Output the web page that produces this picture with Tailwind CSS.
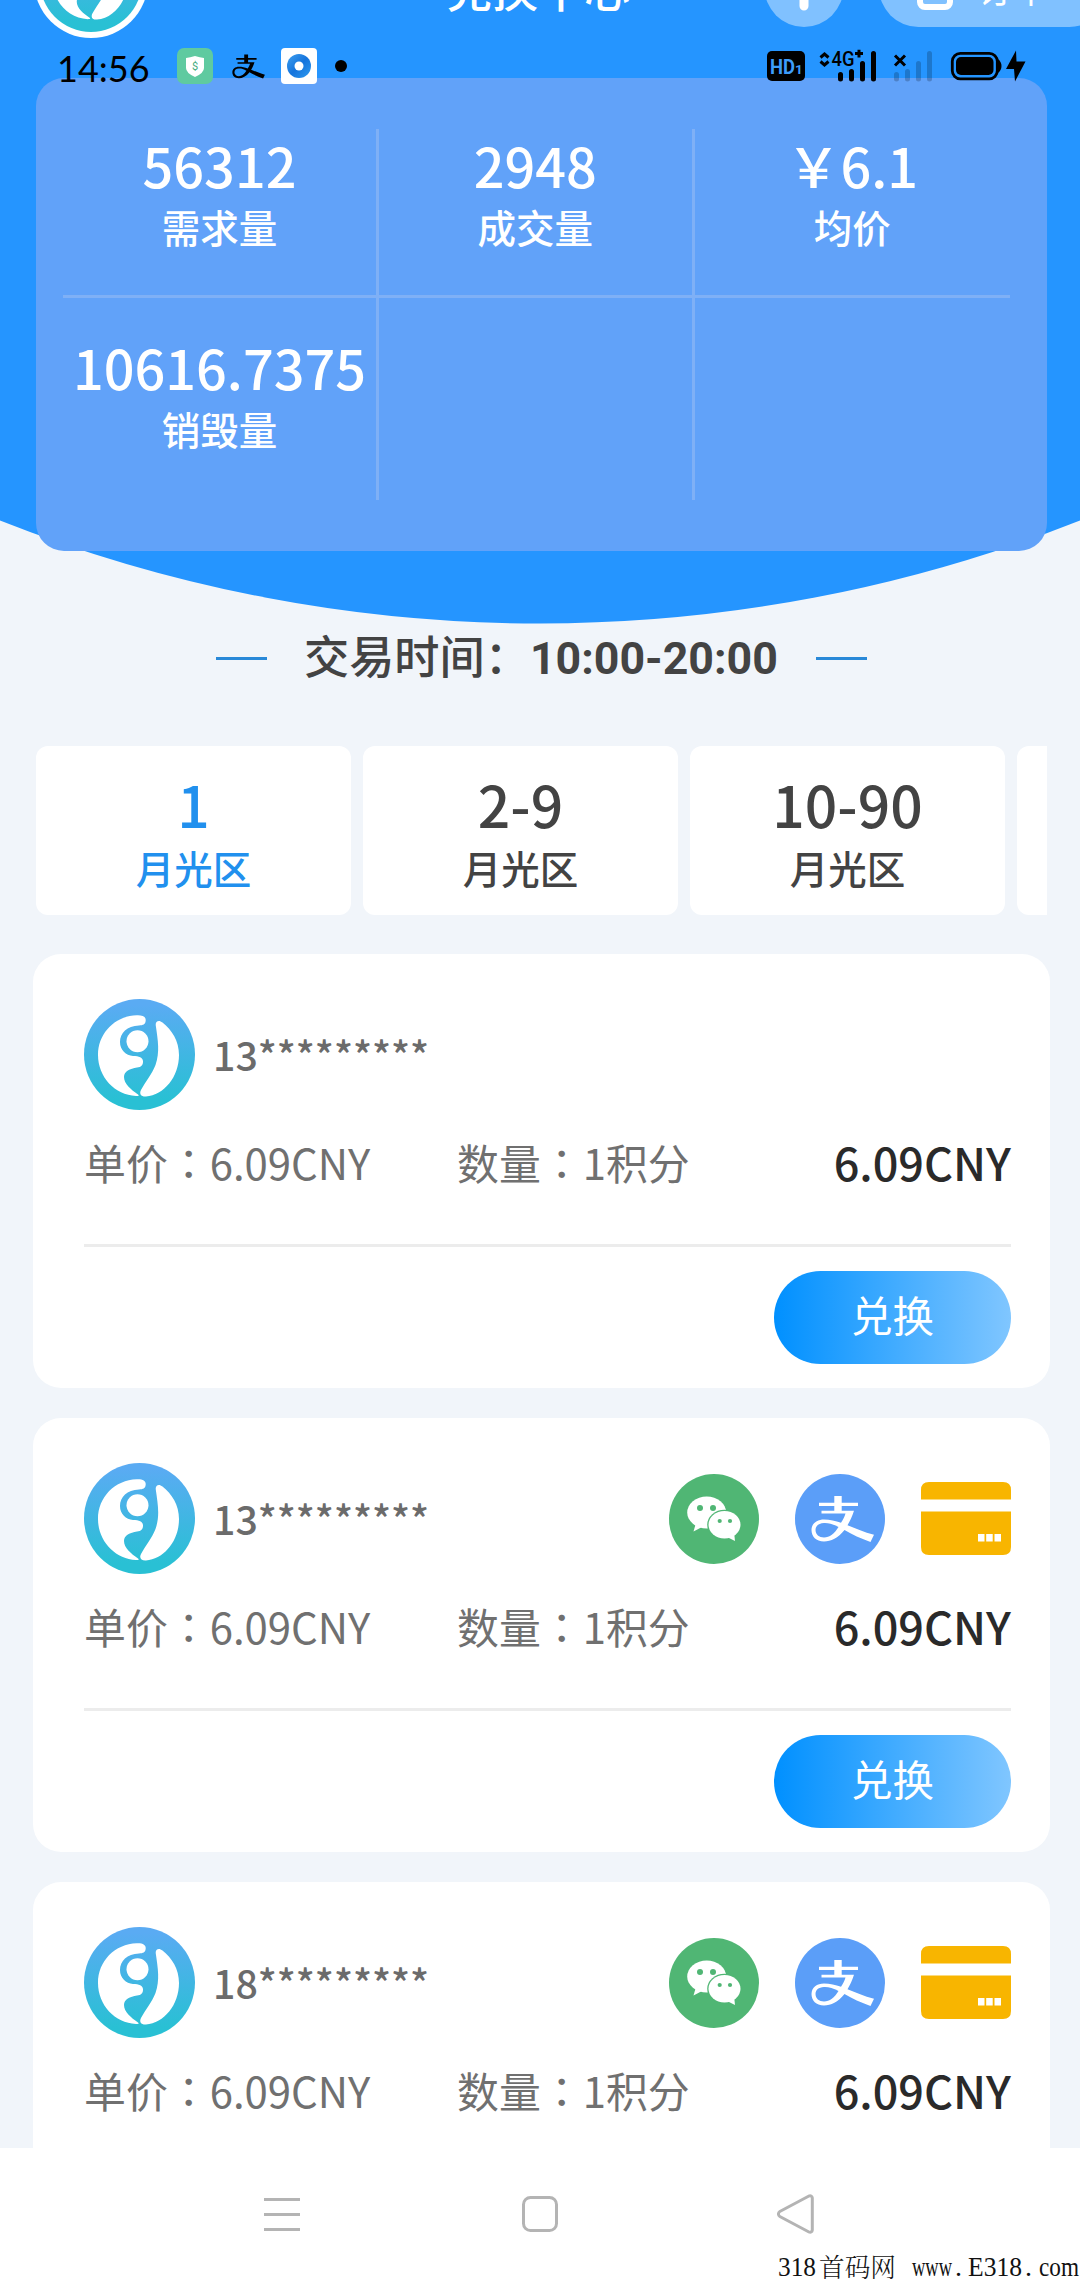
<!DOCTYPE html>
<html lang="zh-CN">
<head>
<meta charset="utf-8">
<title>兑换中心</title>
<script src="https://cdn.jsdelivr.net/npm/@tailwindcss/browser@4"></script>
</head>
<body class="bg-[#f1f5fa]">
<svg width="0" height="0" class="absolute">
  <defs>
    <linearGradient id="lg" x1="0" y1="0" x2="0" y2="1"><stop offset="0.05" stop-color="#5aabf3"/><stop offset="0.9" stop-color="#29c0d4"/></linearGradient>
    <linearGradient id="sw" x1="0" y1="0" x2="1" y2="1"><stop offset="0" stop-color="#3fa0f0"/><stop offset="0.5" stop-color="#1574dc"/><stop offset="1" stop-color="#2f9bf0"/></linearGradient>
    <symbol id="logo" viewBox="0 0 111 111">
      <circle cx="55.5" cy="55.5" r="55.5" fill="url(#lg)"/>
      <path fill="#fff" d="M52.7 16.3C59 16 62 18 61.7 21.5C61.5 25.500 59 26.200 55 26.500C43 27 36 34 36 43C36 51 42 56.500 49 57C55 57 59 58.500 59 62.500C59 66.500 57 68 53 68.500C46 69.500 40 72.500 40 78C40 85 47 90.500 54 95.500C55.500 96.800 54.500 97 52 97C31 96 14 78 14 56C14 34 31 17 52.700 16.300Z"/>
      <circle cx="53.500" cy="42.300" r="11" fill="#fff"/>
      <path fill="#fff" d="M71.700 26C71.500 22 75 20.500 78.500 23.500C88 31 95 42 95 56C95 78 80 96 62 97.500C57 97.800 55 95 57 91C62 82 68 75 71.500 66C76 53 74 42 71.700 26Z"/>
    </symbol>
    <symbol id="wechat" viewBox="0 0 90 90">
      <circle cx="45" cy="45" r="45" fill="#50b674"/>
      <ellipse cx="37.700" cy="38.500" rx="19.500" ry="16" fill="#fff"/>
      <path fill="#fff" d="M27 49L24.500 57.500L34 52.500Z"/>
      <circle cx="31" cy="34" r="3" fill="#50b674"/><circle cx="44" cy="34" r="3" fill="#50b674"/>
      <ellipse cx="55.500" cy="50.800" rx="17.300" ry="15" fill="#50b674"/>
      <ellipse cx="55.500" cy="50.800" rx="16" ry="13.700" fill="#fff"/>
      <path fill="#fff" d="M58 63L66 67L65 58Z"/>
      <circle cx="50.700" cy="47" r="2.100" fill="#50b674"/><circle cx="61" cy="47" r="2.100" fill="#50b674"/>
    </symbol>
    <symbol id="zhi" viewBox="16 21 63 48">
      <path fill="currentColor" d="M24 28.700H39.300V22H46.700V28.700H63V31.900H46.700V36.700H59C57 43 55 47 52.500 51.200C61 54.500 69 58 79 60.800L75.500 68C66 64.500 57 60.500 49.500 56C43 64 36 67.500 29 67.500C21 67.500 16.500 62.500 16.500 56C16.500 49.500 22 45.500 29 45.500C35 45.500 40.500 46.800 46 48.800C48 46 49.500 43 50.500 39.600H26.500V36.700H39.300V31.900H24Z"/>
      <path class="fill-(--hole)" d="M43.500 53C38 50 33.500 48.800 29 49C23.500 49.300 20.500 52 20.500 56C20.500 60.500 24 63.500 29 63.500C34.500 63.500 39.500 59.500 43.500 53Z"/>
    </symbol>
    <symbol id="card" viewBox="0 0 90 73">
      <path fill="#f8b500" d="M8 0H82Q90 0 90 8V17.500H0V8Q0 0 8 0ZM0 29.500H90V65Q90 73 82 73H8Q0 73 0 65Z"/>
      <path fill="#fff" d="M57 52h6.500v7.500h-6.500zM65.200 52h6.500v7.500h-6.500zM73.500 52h6.500v7.500h-6.500z"/>
    </symbol>
  </defs>
</svg>

<div class="relative flex h-[2280px] w-[1080px] flex-col overflow-hidden bg-[#f1f5fa] font-['Noto_Sans_CJK_SC',sans-serif] text-[#434343]">
  <!-- curved header backdrop -->
  <svg class="absolute left-0 top-0" width="1080" height="630" viewBox="0 0 1080 630"><path d="M0 0H1080V520.500A1467 1467 0 0 1 0 520.500Z" fill="#2595ff"/></svg>

  <!-- title bar, scrolled partly off the top -->
  <div class="absolute left-[34px] -top-[76px] flex size-[114px] items-center justify-center rounded-full bg-white"><svg class="size-[102px]"><use href="#logo"/></svg></div>
  <div class="absolute left-[446px] -top-[42px] whitespace-nowrap text-[46px] font-medium leading-[58px] text-white">兑换中心</div>
  <svg class="absolute left-[764px] -top-[52px]" width="80" height="79" viewBox="0 0 80 79"><circle cx="40" cy="39.500" r="39.500" fill="#80c1ff"/><path d="M40 21V58M20 39.500H60" stroke="#fff" stroke-width="9" stroke-linecap="round"/></svg>
  <div class="absolute left-[879px] -top-[52px] flex h-[79px] w-[230px] rounded-full bg-[#80c1ff]">
    <svg class="ml-[38px] mt-[20px]" width="37" height="43" viewBox="0 0 37 43"><rect x="3" y="4" width="30" height="35" rx="5" fill="none" stroke="#fff" stroke-width="6"/></svg>
    <span class="ml-[23px] mt-[12px] whitespace-nowrap text-[36px] leading-[54px] text-white">订单</span>
  </div>

  <!-- statistics panel -->
  <section class="relative ml-[36px] mt-[78px] h-[473px] w-[1011px] shrink-0 rounded-[28px] bg-[#61a2f9] pl-[27px] pt-[51px] text-center font-medium text-white">
    <div class="grid h-[371px] w-[947px] grid-cols-[316px_315.500px_315.500px] grid-rows-[169px_202px]">
      <div class="border-b-[3px] border-r-[3px] border-[#7fb0f6] pt-[6px]"><p class="text-[54px] leading-[60px]">56312</p><p class="mt-[5px] text-[38.500px] leading-[52px]">需求量</p></div>
      <div class="border-b-[3px] border-r-[3px] border-[#7fb0f6] pt-[6px]"><p class="text-[54px] leading-[60px]">2948</p><p class="mt-[5px] text-[38.500px] leading-[52px]">成交量</p></div>
      <div class="border-b-[3px] border-[#7fb0f6] pt-[6px]"><p class="text-[54px] leading-[60px]">￥6.1</p><p class="mt-[5px] text-[38.500px] leading-[52px]">均价</p></div>
      <div class="border-r-[3px] border-[#7fb0f6] pt-[39px]"><p class="text-[54px] leading-[60px]">10616.7375</p><p class="mt-[5px] text-[38.500px] leading-[52px]">销毁量</p></div>
      <div class="border-r-[3px] border-[#7fb0f6]"></div>
      <div></div>
    </div>
  </section>

  <!-- trading hours -->
  <div class="relative mt-[77px] flex h-[60px] shrink-0 items-center pl-[216px]">
    <i class="h-[3px] w-[51px] bg-[#2989d8]"></i>
    <p class="-mt-[3px] ml-[37px] w-[512px] whitespace-nowrap text-[45.200px] font-medium leading-[60px]">交易时间：<span class="font-[Roboto] text-[44.700px] font-bold">10:00-20:00</span></p>
    <i class="h-[3px] w-[51px] bg-[#2989d8]"></i>
  </div>

  <!-- zone tabs -->
  <div class="ml-[36px] mt-[58px] flex h-[169px] w-[1011px] shrink-0 gap-[12px] overflow-hidden text-center font-medium">
    <div class="w-[315px] shrink-0 rounded-[12px] bg-white pt-[27px] text-[#2190ee]"><p class="text-[57px] leading-[60px]">1</p><p class="mt-[8px] text-[38.500px] leading-[52px]">月光区</p></div>
    <div class="w-[315px] shrink-0 rounded-[12px] bg-white pt-[27px]"><p class="text-[57px] leading-[60px]">2-9</p><p class="mt-[8px] text-[38.500px] leading-[52px]">月光区</p></div>
    <div class="w-[315px] shrink-0 rounded-[12px] bg-white pt-[27px]"><p class="text-[57px] leading-[60px]">10-90</p><p class="mt-[8px] text-[38.500px] leading-[52px]">月光区</p></div>
    <div class="w-[315px] shrink-0 rounded-[12px] bg-white"></div>
  </div>

  <!-- offers -->
  <main class="mt-[39px] flex h-[1194px] shrink-0 flex-col gap-[30px] overflow-hidden pl-[33px] pr-[30px]">
    <article class="h-[434px] shrink-0 rounded-[28px] bg-white pl-[51px] pr-[39px] pt-[45px]">
      <div class="flex h-[111px] items-center"><svg class="size-[111px]"><use href="#logo"/></svg><span class="-mt-[2px] ml-[18px] text-[39.300px] font-medium leading-[60px] text-[#6b6b6b]">13*********</span></div>
      <div class="mt-[22px] flex h-[60px] text-[41.900px] leading-[60px] text-[#707070]"><span class="w-[373px]">单价<span class="font-['Noto_Sans_CJK_TC']" lang="zh-TW">：</span>6.09CNY</span><span>数量<span class="font-['Noto_Sans_CJK_TC']" lang="zh-TW">：</span>1积分</span><span class="ml-auto text-[45px] font-medium text-[#2a2a2a]">6.09CNY</span></div>
      <div class="mt-[52px] h-[3px] bg-[#ececec]"></div>
      <div class="mt-[24px] flex justify-end"><button class="h-[93px] w-[237px] rounded-full bg-linear-to-r/srgb from-[#0090ff] to-[#80c6ff] pb-[6px] text-[41.500px] leading-[87px] text-white">兑换</button></div>
    </article>
    <article class="h-[434px] shrink-0 rounded-[28px] bg-white pl-[51px] pr-[39px] pt-[45px]">
      <div class="flex h-[111px] items-center"><svg class="size-[111px]"><use href="#logo"/></svg><span class="-mt-[2px] ml-[18px] text-[39.300px] font-medium leading-[60px] text-[#6b6b6b]">13*********</span>
        <div class="ml-auto flex items-center gap-[36px]"><svg class="size-[90px]"><use href="#wechat"/></svg><div class="flex size-[90px] items-center justify-center rounded-full bg-[#5b9ef8] pl-[5px] text-white [--hole:#5b9ef8]"><svg class="h-[48px] w-[63px]"><use href="#zhi"/></svg></div><svg class="h-[73px] w-[90px]"><use href="#card"/></svg></div></div>
      <div class="mt-[22px] flex h-[60px] text-[41.900px] leading-[60px] text-[#707070]"><span class="w-[373px]">单价<span class="font-['Noto_Sans_CJK_TC']" lang="zh-TW">：</span>6.09CNY</span><span>数量<span class="font-['Noto_Sans_CJK_TC']" lang="zh-TW">：</span>1积分</span><span class="ml-auto text-[45px] font-medium text-[#2a2a2a]">6.09CNY</span></div>
      <div class="mt-[52px] h-[3px] bg-[#ececec]"></div>
      <div class="mt-[24px] flex justify-end"><button class="h-[93px] w-[237px] rounded-full bg-linear-to-r/srgb from-[#0090ff] to-[#80c6ff] pb-[6px] text-[41.500px] leading-[87px] text-white">兑换</button></div>
    </article>
    <article class="h-[434px] shrink-0 rounded-[28px] bg-white pl-[51px] pr-[39px] pt-[45px]">
      <div class="flex h-[111px] items-center"><svg class="size-[111px]"><use href="#logo"/></svg><span class="-mt-[2px] ml-[18px] text-[39.300px] font-medium leading-[60px] text-[#6b6b6b]">18*********</span>
        <div class="ml-auto flex items-center gap-[36px]"><svg class="size-[90px]"><use href="#wechat"/></svg><div class="flex size-[90px] items-center justify-center rounded-full bg-[#5b9ef8] pl-[5px] text-white [--hole:#5b9ef8]"><svg class="h-[48px] w-[63px]"><use href="#zhi"/></svg></div><svg class="h-[73px] w-[90px]"><use href="#card"/></svg></div></div>
      <div class="mt-[22px] flex h-[60px] text-[41.900px] leading-[60px] text-[#707070]"><span class="w-[373px]">单价<span class="font-['Noto_Sans_CJK_TC']" lang="zh-TW">：</span>6.09CNY</span><span>数量<span class="font-['Noto_Sans_CJK_TC']" lang="zh-TW">：</span>1积分</span><span class="ml-auto text-[45px] font-medium text-[#2a2a2a]">6.09CNY</span></div>
    </article>
  </main>

  <!-- system navigation -->
  <nav class="relative h-[132px] shrink-0 bg-white">
    <div class="flex items-start pl-[264px] pt-[46px]">
      <svg width="36" height="40" viewBox="0 0 36 40" fill="none" stroke="#b4b4b4" stroke-width="3"><path d="M0 5.500H36M0 20.500H36M0 35.500H36"/></svg>
      <svg class="ml-[222px]" width="36" height="40" viewBox="0 0 36 40" fill="none" stroke="#b4b4b4" stroke-width="3"><rect x="1.500" y="3.500" width="33" height="33" rx="7"/></svg>
      <svg class="ml-[219px]" width="38" height="40" viewBox="0 0 38 40" fill="none" stroke="#b4b4b4" stroke-width="3" stroke-linejoin="round"><path d="M2.800 17.500L31.500 2.200Q35 1 35.300 4V36Q35 39 31.500 37.800L2.800 22.500Q0 20 2.800 17.500Z"/></svg>
    </div>
    <svg class="absolute bottom-0 right-0" width="304" height="30" viewBox="776 2250 304 30" fill="#111" font-family="'Liberation Serif',serif" font-size="28">
      <text x="778" y="2276" textLength="38" lengthAdjust="spacingAndGlyphs">318</text>
      <text x="819" y="2277" font-family="'Noto Serif CJK SC','Noto Sans CJK SC',sans-serif" font-weight="300" font-size="26" textLength="77" lengthAdjust="spacingAndGlyphs">首码网</text>
      <text x="912" y="2276" textLength="40" lengthAdjust="spacingAndGlyphs">www</text>
      <text x="955" y="2276">.</text>
      <text x="968" y="2276" textLength="54" lengthAdjust="spacingAndGlyphs">E318</text>
      <text x="1025" y="2276">.</text>
      <text x="1039" y="2276" textLength="40" lengthAdjust="spacingAndGlyphs">com</text>
    </svg>
  </nav>

  <!-- phone status bar, laid over the page -->
  <div class="absolute inset-x-0 top-[46px] flex h-[40px] items-center pl-[57px] text-black">
    <span class="mt-[3px] w-[120px] font-[Lato] text-[36px] leading-[40px]">14:56</span>
    <svg width="36" height="36" viewBox="0 0 36 36"><rect width="36" height="36" rx="7" fill="#5fcaa0"/><path fill="#fff" d="M18 8Q23 9.500 27 10V20Q27 25 18 29Q9 25 9 20V10Q13 9.500 18 8Z"/><text x="18" y="21.500" font-family="Roboto" font-size="11" text-anchor="middle" fill="#43ab80">$</text></svg>
    <svg class="ml-[19px] [--hole:#2595ff]" width="33" height="25"><use href="#zhi"/></svg>
    <svg class="ml-[16px]" width="36" height="36" viewBox="0 0 36 36"><rect width="36" height="36" rx="4" fill="#fff"/><circle cx="18" cy="18" r="12" fill="url(#sw)"/><circle cx="18" cy="18" r="4.500" fill="#fff"/></svg>
    <i class="ml-[18px] size-[12px] rounded-full bg-black"></i>
    <svg class="ml-[419px] shrink-0" width="260" height="34" viewBox="766 49 260 34">
      <rect x="767" y="51" width="38" height="30" rx="5"/>
      <g fill="#3d9dfb" font-family="Roboto" font-weight="700"><text x="770" y="74" font-size="21" textLength="25" lengthAdjust="spacingAndGlyphs">HD</text><text x="795" y="74" font-size="13.500">1</text></g>
      <path fill="none" stroke="#000" stroke-width="3" d="M820.500 57.500L824.500 54L828.500 57.500M820.500 61.500L824.500 65L828.500 61.500M855 53.500H863M859 49.800V57.500"/>
      <text x="831.500" y="65.500" font-family="Roboto" font-weight="500" font-size="20" textLength="23" lengthAdjust="spacingAndGlyphs">4G</text>
      <path stroke="#000" stroke-width="5" stroke-linecap="round" d="M840.500 74.500V79M851.500 71.500V79M862.500 63.500V79M873.500 53.500V79"/>
      <path stroke="#000" stroke-opacity=".2" stroke-width="5" stroke-linecap="round" d="M896.500 74.500V79M907.500 71.500V79M918.500 63.500V79M929.500 53.500V79"/>
      <path stroke="#000" stroke-width="3" d="M895 55.500L905 65.500M905 55.500L895 65.500"/>
      <rect x="952.300" y="53.300" width="45" height="25.500" rx="8" fill="none" stroke="#000" stroke-width="2.800"/><rect x="956" y="57" width="37.500" height="18" rx="5"/><path d="M998 59Q1001.500 62 1001.500 66Q1001.500 70 998 73Z"/>
      <path d="M1016 50.500L1006 69H1014L1015 81.500L1025.500 61.500H1016.500Z"/>
    </svg>
  </div>
</div>
</body>
</html>
